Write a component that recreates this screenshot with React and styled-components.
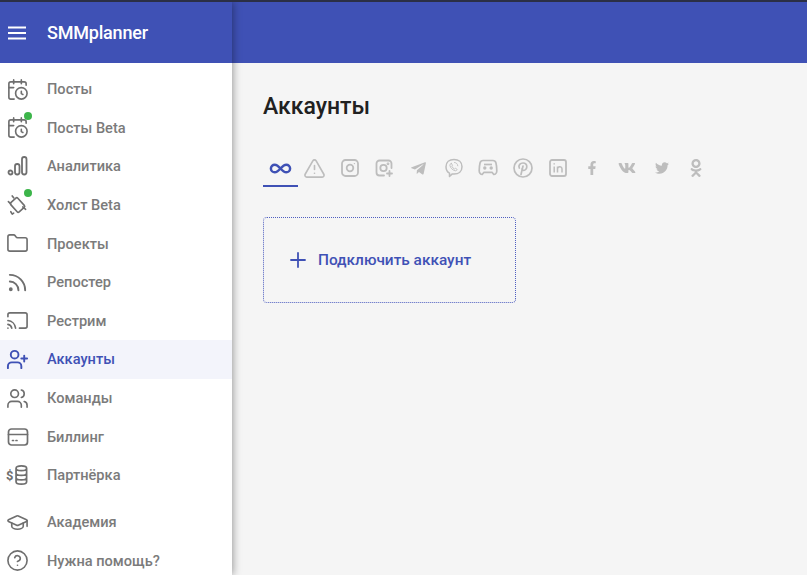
import React from 'react';
import styled, { createGlobalStyle } from 'styled-components';
import {
  CalendarClock, Folder, Rss, Cast, UserPlus, Users,
  GraduationCap, CircleHelp, Infinity as InfinityIcon, TriangleAlert, Plus,
} from 'lucide-react';
import { FaFacebookF, FaVk, FaTwitter, FaOdnoklassniki, FaTelegramPlane } from 'react-icons/fa';

const GlobalStyle = createGlobalStyle`
  html, body { margin: 0; padding: 0; background: #f5f5f5; }
  body { font-family: Roboto, "Noto Sans", sans-serif; }
  * { box-sizing: border-box; }
`;

const BLUE = '#3f51b5';

const Page = styled.div`
  width: 807px;
  height: 575px;
  overflow: hidden;
  display: flex;
  border-top: 2px solid #2b2f45;
`;
const Sidebar = styled.aside`
  width: 232px;
  flex: none;
  background: #fff;
  box-shadow: 1px 0 8px rgba(0, 0, 0, 0.38);
  display: flex;
  flex-direction: column;
  position: relative;
  z-index: 1;
`;
const Brand = styled.div`
  height: 61px;
  flex: none;
  background: ${BLUE};
  color: #fff;
  display: flex;
  align-items: center;
  gap: 21px;
  padding: 0 0 0 8px;
  font-size: 18px;
  font-weight: 500;
  letter-spacing: -0.2px;
`;
const Nav = styled.nav`
  padding-top: 7px;
  display: flex;
  flex-direction: column;
`;
const Row = styled.div`
  height: 38.6px;
  flex: none;
  display: flex;
  align-items: center;
  gap: 18px;
  padding-left: 6px;
  margin-top: ${(p) => (p.$gap ? '8.4px' : '0')};
  font-size: 14.6px;
  font-weight: 500;
  color: ${(p) => (p.$active ? BLUE : '#7b7b7b')};
  background: ${(p) => (p.$active ? '#f3f4fb' : 'transparent')};
`;
const IconBox = styled.span`
  width: 23px;
  height: 24px;
  flex: none;
  display: flex;
  align-items: center;
  justify-content: center;
  position: relative;
  color: ${(p) => (p.$active ? BLUE : '#6f6f6f')};
`;
const Dot = styled.span`
  position: absolute;
  top: -4px;
  right: -3px;
  width: 8px;
  height: 8px;
  border-radius: 50%;
  background: #3cb54a;
`;
const Content = styled.div`
  flex: 1;
  display: flex;
  flex-direction: column;
  min-width: 0;
`;
const TopBar = styled.header`
  height: 61px;
  flex: none;
  background: ${BLUE};
`;
const Main = styled.main`
  flex: 1;
  padding-left: 31px;
  background: #f5f5f5;
`;
const Title = styled.h1`
  margin: 30px 0 0;
  font-size: 23px;
  line-height: 28px;
  font-weight: 500;
  color: #212121;
`;
const Tabs = styled.div`
  display: flex;
  margin-top: 30px;
`;
const Tab = styled.div`
  width: 34.67px;
  height: 36px;
  display: flex;
  align-items: center;
  justify-content: center;
  color: ${(p) => (p.$active ? BLUE : '#bdbdbd')};
  border-bottom: 2px solid ${(p) => (p.$active ? BLUE : 'transparent')};
`;
const AddCard = styled.div`
  margin-top: 30px;
  width: 253px;
  height: 86px;
  border: 1px dotted #4f5fc0;
  border-radius: 4px;
  display: flex;
  align-items: center;
  gap: 8px;
  padding-left: 22px;
  color: ${BLUE};
  font-size: 15.4px;
  font-weight: 500;
`;

const Burger = () => (
  <svg width="18" height="14" viewBox="0 0 18 14" fill="none" stroke="currentColor" strokeWidth="2">
    <path d="M0 1.500h18M0 7h18M0 12.500h18" />
  </svg>
);
const Analytics = () => (
  <svg width="22" height="22" viewBox="0 0 22 22" fill="none" stroke="currentColor" strokeWidth="1.8">
    <circle cx="3.500" cy="17.500" r="2" />
    <rect x="8" y="9" width="4.500" height="10.500" rx="2.200" />
    <rect x="15" y="2" width="4.500" height="17.500" rx="2.200" />
  </svg>
);
const Canvas = () => (
  <svg width="28" height="28" viewBox="0 0 24 24" fill="none" stroke="currentColor" strokeWidth="1.700" strokeLinecap="round" strokeLinejoin="round">
    <rect x="7" y="5.500" width="10" height="13" rx="1.500" transform="rotate(-42 12 12)" />
    <path d="M2.500 8.500l2.500 2.500M6.500 2.500l1.500 2M17.500 14l3 2.500M8 20.500l-1.500 1-1.500-2.500" />
  </svg>
);
const Card = () => (
  <svg width="22" height="20" viewBox="0 0 22 20" fill="none" stroke="currentColor" strokeWidth="1.700" strokeLinecap="round">
    <rect x="1.500" y="2" width="19" height="16" rx="3" />
    <path d="M1.500 7.500h19M5.500 13.500h1M9 13.500h1" />
  </svg>
);
const Coins = () => (
  <svg width="24" height="22" viewBox="0 0 24 22" fill="none" stroke="currentColor" strokeWidth="1.800">
    <text x="0" y="16" fontSize="13.500" fontWeight="700" fill="currentColor" stroke="none" fontFamily="Roboto, sans-serif">$</text>
    <path d="M10.500 4c0-1.500 2-2.500 5.500-2.500s5.500 1 5.500 2.500v14c0 1.500-2 2.500-5.500 2.500s-5.500-1-5.500-2.500zM10.500 4c0 1.500 2 2.500 5.500 2.500s5.500-1 5.500-2.500M10.500 9c0 1.500 2 2.500 5.500 2.500s5.500-1 5.500-2.500M10.500 13.500c0 1.500 2 2.500 5.500 2.500s5.500-1 5.500-2.500" />
  </svg>
);
const InstaAdd = () => (
  <svg width="20" height="20" viewBox="0 0 20 20" fill="none" stroke="currentColor" strokeWidth="1.800" strokeLinecap="round">
    <path d="M17.500 10V5.500a3 3 0 0 0-3-3h-9a3 3 0 0 0-3 3v9a3 3 0 0 0 3 3H10" />
    <circle cx="9.500" cy="10" r="3.200" />
    <circle cx="14" cy="5.800" r=".5" />
    <path d="M15.500 13v5M13 15.500h5" />
  </svg>
);
const Insta = () => (
  <svg width="18" height="18" viewBox="0 0 18 18" fill="none" stroke="currentColor" strokeWidth="1.800">
    <rect x="1" y="1" width="16" height="16" rx="3.500" />
    <circle cx="9" cy="9" r="3.300" />
    <circle cx="13.400" cy="4.600" r=".7" fill="currentColor" stroke="none" />
  </svg>
);
const Viber = () => (
  <svg width="20" height="20" viewBox="0 0 20 20" fill="none" stroke="currentColor" strokeLinecap="round" strokeLinejoin="round">
    <path strokeWidth="1.500" d="M10 1.500c4.600 0 8 2.600 8 7.200s-3.400 7.300-8 7.300c-.6 0-1.200 0-1.700-.1L5.500 18.500v-3.300C3.200 14 2 11.600 2 8.700 2 4.100 5.400 1.500 10 1.500z" />
    <path strokeWidth=".9" d="M7.300 5.500l1.200 1.700-.7 1c.5 1.300 1.400 2.200 2.800 2.800l1-.7 1.600 1.200c-.4 1-1.300 1.500-2.300 1.200-2.600-.9-4.400-2.700-5-5.200-.2-.9.4-1.700 1.400-2zM10.500 4.500c1.900.1 3.200 1.400 3.300 3.300" />
  </svg>
);
const Discord = () => (
  <svg width="20" height="20" viewBox="0 0 20 20" fill="none" stroke="currentColor" strokeWidth="1.700" strokeLinejoin="round">
    <path d="M5 2.500h10c1.500 0 2.500.8 2.900 2.200.7 2.500.9 5 .9 8 0 1.900-1.200 3.800-3 3.800l-1.800-2.200H6l-1.800 2.200c-1.800 0-3-1.900-3-3.800 0-3 .2-5.500.9-8C2.500 3.300 3.500 2.500 5 2.500z" />
    <path d="M6 6.500h8" />
    <circle cx="6.800" cy="10" r="1.700" fill="currentColor" stroke="none" />
    <circle cx="13.200" cy="10" r="1.700" fill="currentColor" stroke="none" />
  </svg>
);
const Pinterest = () => (
  <svg width="20" height="20" viewBox="0 0 20 20" fill="none" stroke="currentColor" strokeWidth="1.700" strokeLinecap="round">
    <circle cx="10" cy="10" r="9" />
    <path d="M8 16.500l2-8.500M6.300 10c-1.200-3 1-5 3.700-5 2.500 0 4 1.700 3.800 3.800-.2 2.300-1.700 3.700-3.300 3.500-.9-.1-1.500-.6-1.700-1.200" />
  </svg>
);
const Linkedin = () => (
  <svg width="18" height="18" viewBox="0 0 18 18" fill="none" stroke="currentColor" strokeWidth="1.800">
    <rect x="1" y="1" width="16" height="16" rx="2" />
    <path d="M5.200 7.500v6M5.200 4.300v1.300M8.500 13.500v-6M8.500 10c0-3 4.500-3.300 4.500 0v3.500" strokeWidth="1.500" />
  </svg>
);

const navIcon = { size: 25, strokeWidth: 1.7 };
const menu = [
  { label: 'Посты', icon: <CalendarClock {...navIcon} /> },
  { label: 'Посты Beta', icon: <CalendarClock {...navIcon} />, dot: true },
  { label: 'Аналитика', icon: <Analytics /> },
  { label: 'Холст Beta', icon: <Canvas />, dot: true },
  { label: 'Проекты', icon: <Folder {...navIcon} /> },
  { label: 'Репостер', icon: <Rss {...navIcon} strokeWidth={2} /> },
  { label: 'Рестрим', icon: <Cast {...navIcon} /> },
  { label: 'Аккаунты', icon: <UserPlus {...navIcon} strokeWidth={2} />, active: true },
  { label: 'Команды', icon: <Users {...navIcon} /> },
  { label: 'Биллинг', icon: <Card /> },
  { label: 'Партнёрка', icon: <Coins /> },
  { label: 'Академия', icon: <GraduationCap {...navIcon} />, gap: true },
  { label: 'Нужна помощь?', icon: <CircleHelp {...navIcon} /> },
];

const tabs = [
  <InfinityIcon size={23} strokeWidth={2.6} />,
  <TriangleAlert size={23} strokeWidth={1.7} />,
  <Insta />,
  <InstaAdd />,
  <FaTelegramPlane size={17} />,
  <Viber />,
  <Discord />,
  <Pinterest />,
  <Linkedin />,
  <FaFacebookF size={14} />,
  <FaVk size={18} />,
  <FaTwitter size={14} />,
  <FaOdnoklassniki size={18} />,
];

export default function App() {
  return (
    <Page>
      <GlobalStyle />
      <Sidebar>
        <Brand>
          <Burger />
          SMMplanner
        </Brand>
        <Nav>
          {menu.map((m) => (
            <Row key={m.label} $active={m.active} $gap={m.gap}>
              <IconBox $active={m.active}>
                {m.icon}
                {m.dot && <Dot />}
              </IconBox>
              {m.label}
            </Row>
          ))}
        </Nav>
      </Sidebar>
      <Content>
        <TopBar />
        <Main>
          <Title>Аккаунты</Title>
          <Tabs>
            {tabs.map((t, i) => (
              <Tab key={i} $active={i === 0}>{t}</Tab>
            ))}
          </Tabs>
          <AddCard>
            <Plus size={24} strokeWidth={1.8} />
            Подключить аккаунт
          </AddCard>
        </Main>
      </Content>
    </Page>
  );
}
